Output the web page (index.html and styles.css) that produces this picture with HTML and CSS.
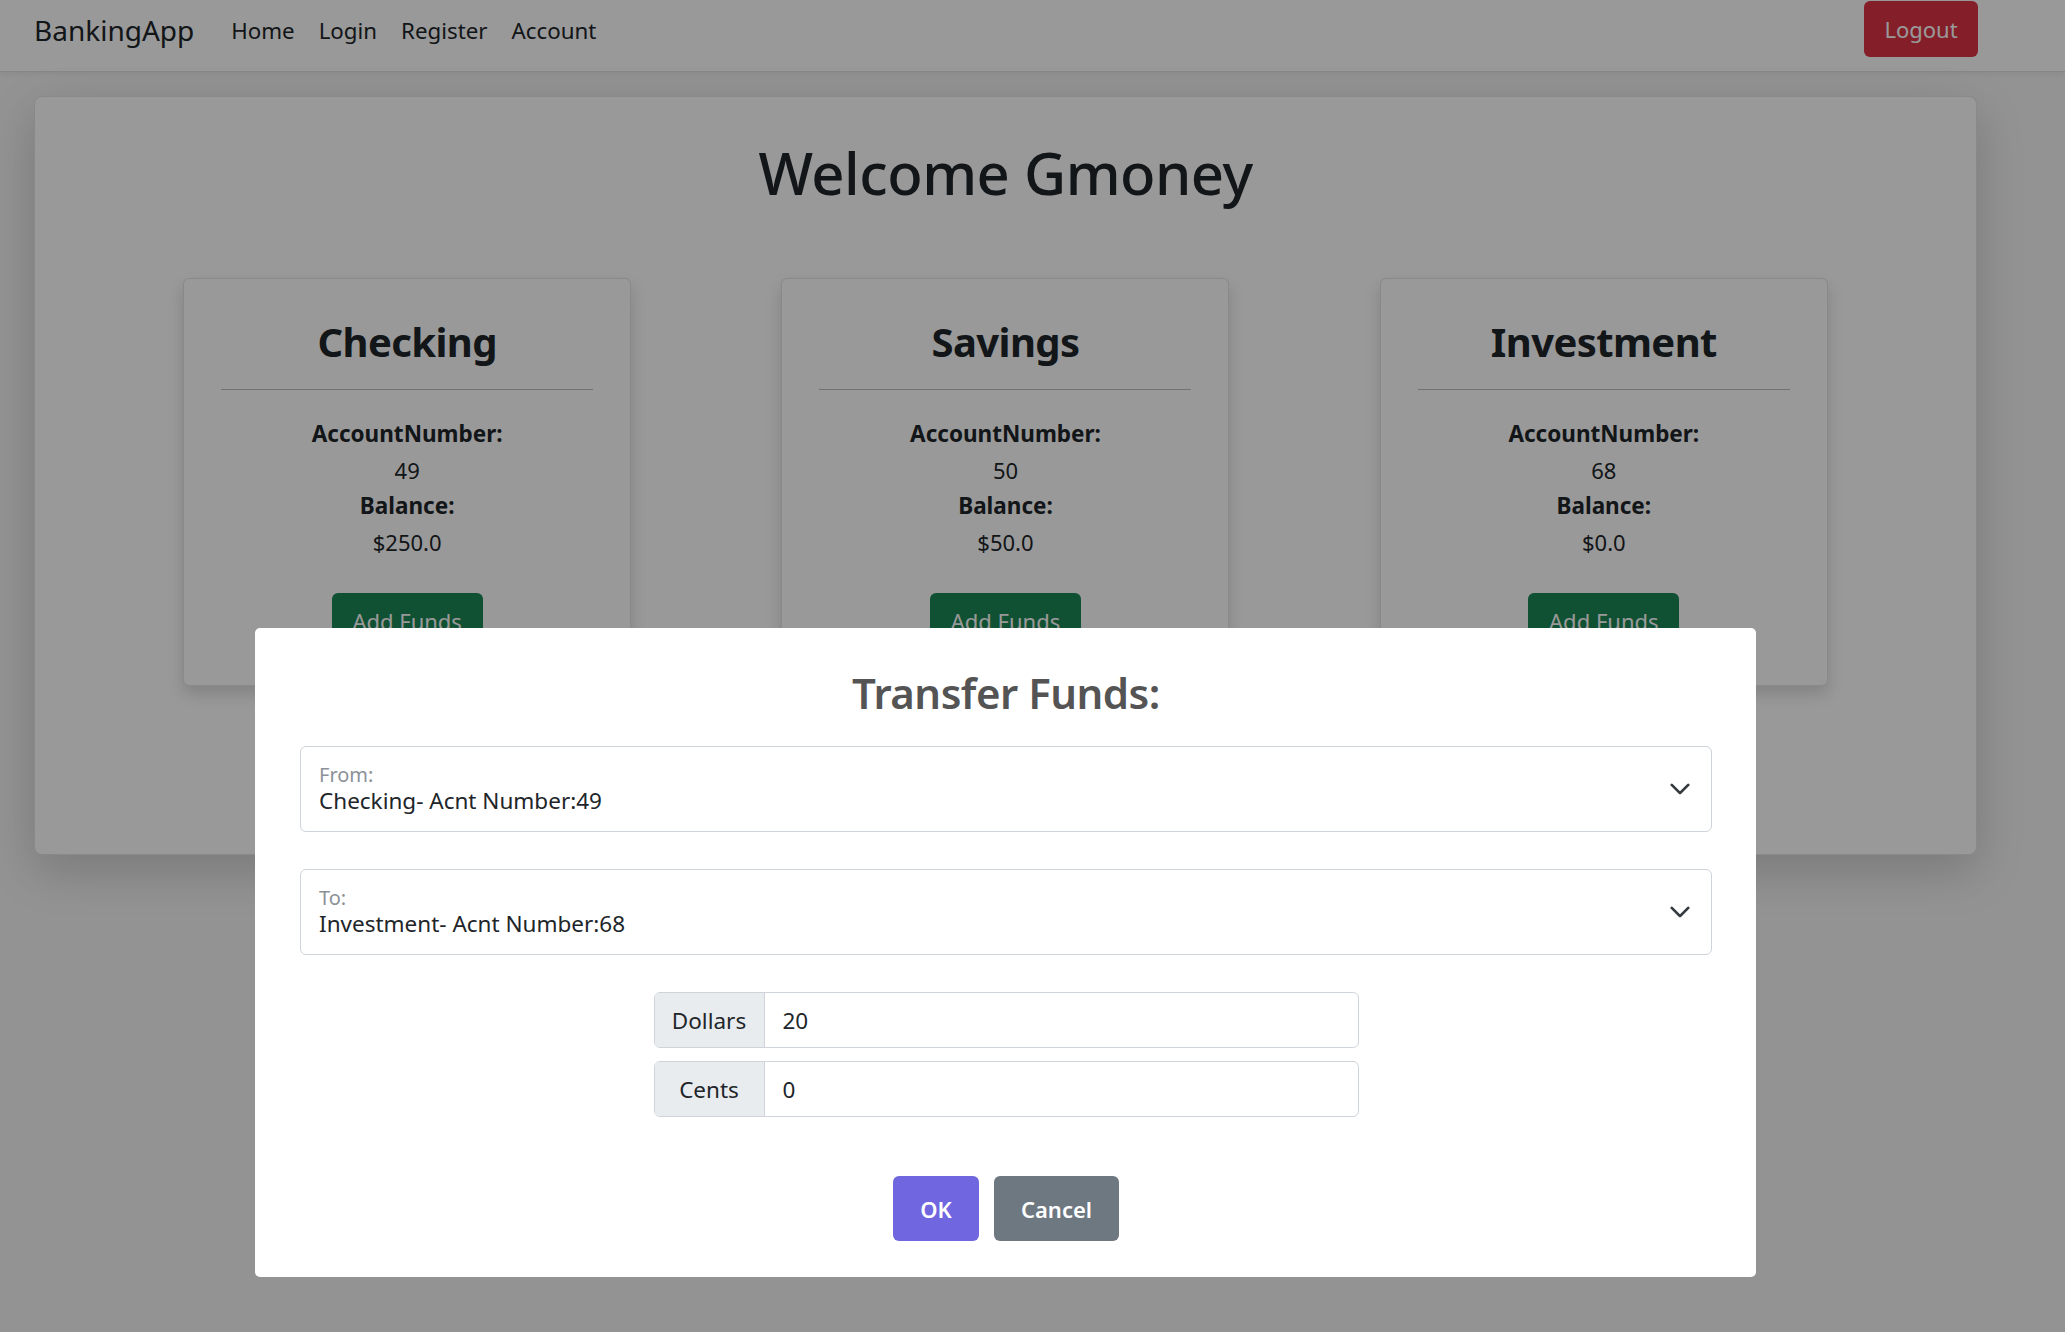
FILE: index.html
```html
<!DOCTYPE html>
<html lang="en">
<head>
<meta charset="utf-8">
<title>BankingApp</title>
<link rel="stylesheet" href="styles.css">
</head>
<body>
<nav class="navbar">
  <div class="nav-inner">
    <a class="brand" href="#">BankingApp</a>
    <ul class="nav-links">
      <li><a href="#">Home</a></li>
      <li><a href="#">Login</a></li>
      <li><a href="#">Register</a></li>
      <li><a href="#">Account</a></li>
    </ul>
    <button class="btn btn-danger logout">Logout</button>
  </div>
</nav>

<main class="main-card">
  <h1 class="welcome">Welcome Gmoney</h1>
  <div class="accounts">
    <section class="acct">
      <h2 class="acct-title">Checking</h2>
      <hr class="acct-rule">
      <div class="acct-info">
        <div class="lbl">AccountNumber:</div>
        <div>49</div>
        <div class="lbl">Balance:</div>
        <div>$250.0</div>
      </div>
      <button class="btn btn-success add">Add Funds</button>
    </section>
    <section class="acct">
      <h2 class="acct-title">Savings</h2>
      <hr class="acct-rule">
      <div class="acct-info">
        <div class="lbl">AccountNumber:</div>
        <div>50</div>
        <div class="lbl">Balance:</div>
        <div>$50.0</div>
      </div>
      <button class="btn btn-success add">Add Funds</button>
    </section>
    <section class="acct">
      <h2 class="acct-title">Investment</h2>
      <hr class="acct-rule">
      <div class="acct-info">
        <div class="lbl">AccountNumber:</div>
        <div>68</div>
        <div class="lbl">Balance:</div>
        <div>$0.0</div>
      </div>
      <button class="btn btn-success add">Add Funds</button>
    </section>
  </div>
</main>

<div class="backdrop"></div>

<div class="popup" role="dialog">
  <h2 class="popup-title">Transfer Funds:</h2>
  <div class="select-box">
    <div class="select-text">
      <span class="float-label">From:</span>
      <span class="select-value">Checking- Acnt Number:49</span>
    </div>
    <svg class="chev" width="22" height="22" viewBox="0 0 16 16"><path d="m2 5 6 6 6-6" fill="none" stroke="#343a40" stroke-width="2" stroke-linecap="round" stroke-linejoin="round"/></svg>
  </div>
  <div class="select-box second">
    <div class="select-text">
      <span class="float-label">To:</span>
      <span class="select-value">Investment- Acnt Number:68</span>
    </div>
    <svg class="chev" width="22" height="22" viewBox="0 0 16 16"><path d="m2 5 6 6 6-6" fill="none" stroke="#343a40" stroke-width="2" stroke-linecap="round" stroke-linejoin="round"/></svg>
  </div>
  <div class="amounts">
    <div class="input-group">
      <span class="addon">Dollars</span>
      <span class="field">20</span>
    </div>
    <div class="input-group">
      <span class="addon">Cents</span>
      <span class="field">0</span>
    </div>
  </div>
  <div class="actions">
    <button class="sbtn confirm">OK</button>
    <button class="sbtn cancel">Cancel</button>
  </div>
</div>
</body>
</html>
```

FILE: styles.css
```css
* { box-sizing: border-box; }

html, body {
  margin: 0;
  padding: 0;
}

body {
  background: #f5f5f5;
  font-family: "Noto Sans", "Open Sans", sans-serif;
  font-size: 22px;
  color: #212529;
  height: 1332px;
  overflow: hidden;
}

/* NAVBAR */
.navbar {
  background: #ffffff;
  border-bottom: 1px solid #dee2e6;
  box-shadow: 0 2px 6px rgba(0,0,0,0.06);
  height: 72px;
}

.nav-inner {
  width: 1944px;
  margin-left: 34px;
  height: 60px;
  display: flex;
  align-items: center;
}

.brand {
  font-size: 28px;
  color: #212529;
  text-decoration: none;
  margin-right: 25px;
}

.nav-links {
  list-style: none;
  margin: 0;
  padding: 0;
  display: flex;
  flex: 1;
}

.nav-links a {
  display: block;
  padding: 0 12px;
  font-size: 22.3px;
  color: #212529;
  text-decoration: none;
}

.btn {
  font-family: inherit;
  border: none;
  color: #fff;
  border-radius: 6px;
  cursor: pointer;
}

.btn-danger { background: #dc3545; }
.btn-success { background: #198754; }

.logout {
  width: 114px;
  height: 56px;
  font-size: 22px;
  align-self: flex-start;
  margin-top: 1px;
}

/* MAIN CARD */
.main-card {
  width: 1943px;
  margin: 24px 0 0 34px;
  background: #ffffff;
  border: 1px solid rgba(0,0,0,0.1);
  border-radius: 8px;
  box-shadow: 0 16px 48px rgba(0,0,0,0.175);
  padding: 40px 73px 167px;
  height: 759px;
}

.welcome {
  margin: 0;
  text-align: center;
  font-size: 58px;
  font-weight: 500;
  line-height: 72px;
  letter-spacing: -0.5px;
}

.accounts {
  margin-top: 69px;
  display: grid;
  grid-template-columns: repeat(3, 1fr);
}

.acct {
  justify-self: center;
  width: 448px;
  height: 408px;
  background: #fff;
  border: 1px solid rgba(0,0,0,0.1);
  border-radius: 6px;
  box-shadow: 0 8px 16px rgba(0,0,0,0.15);
  padding: 36px 37px 36px;
  text-align: center;
}

.acct-title {
  margin: 0;
  font-size: 40px;
  font-weight: 700;
  line-height: 53px;
  letter-spacing: -0.6px;
}

.acct-rule {
  margin: 21px 0 0;
  border: 0;
  border-top: 1px solid rgba(0,0,0,0.25);
}

.acct-info {
  margin-top: 26px;
  font-size: 22px;
  line-height: 36px;
}

.acct-info .lbl {
  font-weight: 700;
  font-size: 22.5px;
}

.add {
  margin-top: 33px;
  width: 151px;
  height: 56px;
  font-size: 22px;
}

/* OVERLAY */
.backdrop {
  position: fixed;
  inset: 0;
  background: rgba(0,0,0,0.4);
}

.popup {
  position: fixed;
  left: 255px;
  top: 628px;
  width: 1501px;
  height: 649px;
  background: #fff;
  border-radius: 5px;
  padding: 36px 44px 0 45px;
}

.popup-title {
  margin: 0;
  text-align: center;
  color: #545454;
  font-size: 42px;
  font-weight: 600;
  line-height: 58px;
  letter-spacing: -0.5px;
}

.select-box {
  margin-top: 24px;
  height: 86px;
  border: 1px solid #ced4da;
  border-radius: 6px;
  display: flex;
  align-items: center;
  padding: 0 20px 0 18px;
}

.select-box.second { margin-top: 37px; }

.select-text {
  flex: 1;
  display: flex;
  flex-direction: column;
}

.float-label {
  font-size: 20px;
  line-height: 24px;
  color: #8c9197;
}

.select-value {
  font-size: 22.5px;
  line-height: 28px;
  color: #212529;
}

.amounts {
  margin: 37px auto 0;
  width: 705px;
  display: flex;
  flex-direction: column;
  gap: 13px;
}

.input-group {
  display: flex;
  height: 56px;
  border: 1px solid #ced4da;
  border-radius: 6px;
  overflow: hidden;
}

.addon {
  width: 110px;
  background: #e9ecef;
  border-right: 1px solid #ced4da;
  display: flex;
  align-items: center;
  justify-content: center;
  font-size: 22.5px;
}

.field {
  flex: 1;
  display: flex;
  align-items: center;
  padding-left: 18px;
  font-size: 22.5px;
}

.actions {
  margin-top: 59px;
  display: flex;
  justify-content: center;
  gap: 15px;
}

.sbtn {
  height: 65px;
  border: none;
  border-radius: 6px;
  color: #fff;
  font-family: inherit;
  font-size: 22px;
  font-weight: 600;
}

.confirm { width: 86px; background: #7066e0; }
.cancel { width: 125px; background: #6e7881; }
```
